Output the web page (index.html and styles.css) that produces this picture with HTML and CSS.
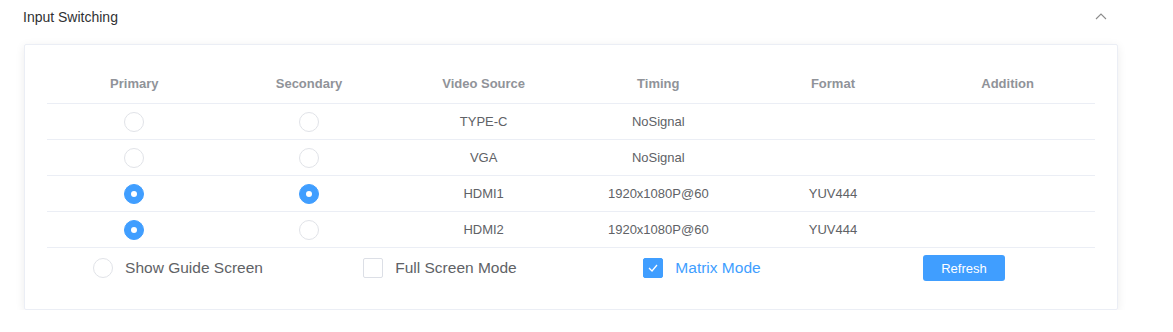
FILE: index.html
```html
<!DOCTYPE html>
<html lang="en">
  <head>
    <meta charset="UTF-8" />
    <meta name="viewport" content="width=device-width, initial-scale=1.0" />
    <title>Input Switching</title>
    <link rel="stylesheet" href="styles.css">
  </head>
  <body>
    <div class="panel">
      <div class="panel-head">
        <span class="panel-title">Input Switching</span>
        <svg class="chevron" width="12" height="8" viewBox="0 0 12 8">
          <polyline points="1,7 6,2 11,7" fill="none" stroke="#8c8c8c" stroke-width="1.1" />
        </svg>
      </div>
      <div class="card">
        <table class="grid">
          <thead>
            <tr>
              <th>Primary</th>
              <th>Secondary</th>
              <th>Video Source</th>
              <th>Timing</th>
              <th>Format</th>
              <th>Addition</th>
            </tr>
          </thead>
          <tbody>
            <tr>
              <td><span class="radio"></span></td>
              <td><span class="radio"></span></td>
              <td>TYPE-C</td>
              <td>NoSignal</td>
              <td></td>
              <td></td>
            </tr>
            <tr>
              <td><span class="radio"></span></td>
              <td><span class="radio"></span></td>
              <td>VGA</td>
              <td>NoSignal</td>
              <td></td>
              <td></td>
            </tr>
            <tr>
              <td><span class="radio checked"></span></td>
              <td><span class="radio checked"></span></td>
              <td>HDMI1</td>
              <td>1920x1080P@60</td>
              <td>YUV444</td>
              <td></td>
            </tr>
            <tr>
              <td><span class="radio checked"></span></td>
              <td><span class="radio"></span></td>
              <td>HDMI2</td>
              <td>1920x1080P@60</td>
              <td>YUV444</td>
              <td></td>
            </tr>
          </tbody>
        </table>
        <div class="controls">
          <label class="option">
            <span class="radio"></span>
            <span>Show Guide Screen</span>
          </label>
          <label class="option">
            <span class="check"></span>
            <span>Full Screen Mode</span>
          </label>
          <label class="option active">
            <span class="check checked">
              <svg width="12" height="10" viewBox="0 0 12 10">
                <polyline points="2,5 5,8 10,2" fill="none" stroke="#fff" stroke-width="1.3" />
              </svg>
            </span>
            <span>Matrix Mode</span>
          </label>
          <div class="option">
            <button class="btn">Refresh</button>
          </div>
        </div>
      </div>
    </div>
  </body>
</html>
```

FILE: styles.css
```css
body {
  margin: 0;
  background: #fff;
  font-family: "Liberation Sans", Arial, sans-serif;
  color: #606266;
}
.panel {
  margin-left: 23px;
  width: 1095px;
}
.panel-head {
  display: flex;
  justify-content: space-between;
  align-items: center;
  height: 33px;
}
.panel-title {
  font-size: 14px;
  color: #303133;
}
.chevron {
  margin-right: 11px;
  margin-top: -1px;
}
.card {
  margin-top: 11px;
  margin-left: 1px;
  border: 1px solid #ebeef5;
  border-radius: 2px;
  box-shadow: 0 2px 10px 0 rgba(0, 0, 0, 0.08);
  padding: 19px 22px 21px 22px;
}
.grid {
  width: 1048px;
  table-layout: fixed;
  border-collapse: collapse;
}
.grid th {
  height: 37px;
  font-size: 13px;
  font-weight: bold;
  color: #909399;
  border-bottom: 1px solid #ebeef5;
  text-align: center;
}
.grid td {
  height: 35px;
  padding: 0;
  font-size: 13px;
  text-align: center;
  border-bottom: 1px solid #ebeef5;
}
.radio {
  display: inline-block;
  box-sizing: border-box;
  width: 20px;
  height: 20px;
  border: 1px solid #e1e3e8;
  border-radius: 50%;
  vertical-align: middle;
  position: relative;
}
.radio.checked {
  background: #409eff;
  border-color: #409eff;
}
.radio.checked::after {
  content: "";
  position: absolute;
  left: 6px;
  top: 6px;
  width: 6px;
  height: 6px;
  border-radius: 50%;
  background: #fff;
}
.controls {
  display: grid;
  grid-template-columns: repeat(4, 1fr);
  width: 1048px;
  height: 40px;
}
.option {
  display: flex;
  align-items: center;
  justify-content: center;
  gap: 12px;
  font-size: 15.5px;
  color: #606266;
}
.option.active {
  color: #409eff;
}
.check {
  display: inline-flex;
  align-items: center;
  justify-content: center;
  box-sizing: border-box;
  width: 20px;
  height: 20px;
  border: 1px solid #dcdfe6;
  border-radius: 2px;
}
.check.checked {
  background: #409eff;
  border-color: #409eff;
}
.btn {
  width: 82px;
  height: 26px;
  border: none;
  border-radius: 3px;
  background: #409eff;
  color: #fff;
  font-family: "Liberation Sans", Arial, sans-serif;
  font-size: 13px;
  padding: 0;
}
```
